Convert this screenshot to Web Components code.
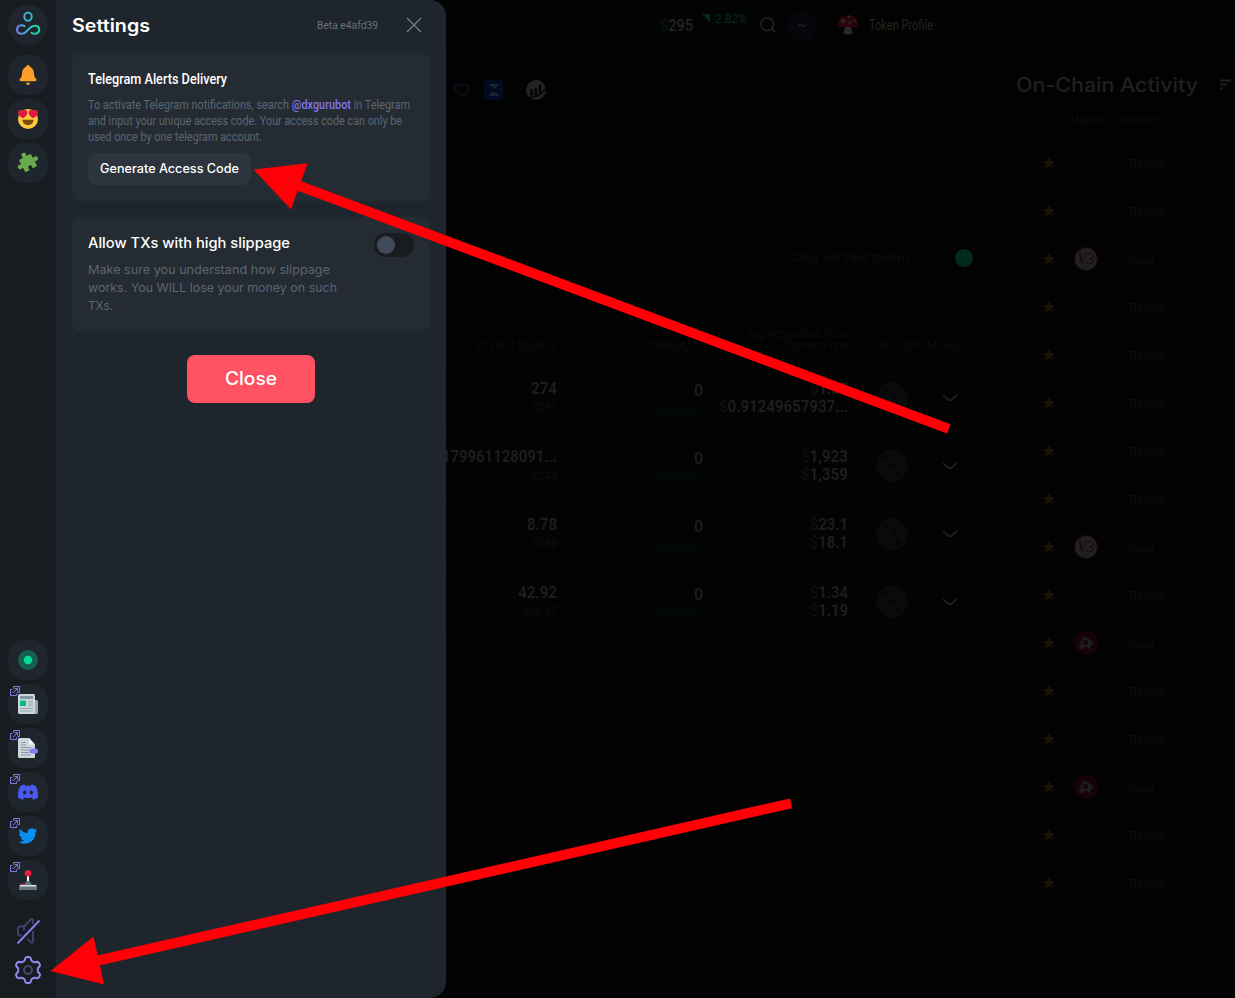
<!DOCTYPE html>
<html lang="en">
<head>
<meta charset="utf-8">
<title>Settings</title>
<style>
html,body{margin:0;background:#020202;overflow:hidden}
</style>
</head>
<body>
<dx-app></dx-app>
<script>
const COND = '"Roboto","Noto Sans",sans-serif';
const WIDE = '"Inter","Open Sans",sans-serif';

function define(name, html, after) {
  customElements.define(name, class extends HTMLElement {
    connectedCallback() {
      if (this.shadowRoot) return;
      const root = this.attachShadow({ mode: 'open' });
      root.innerHTML = typeof html === 'function' ? html(this) : html;
      if (after) after(this, root);
    }
  });
}

/* A single line of text set to an exact width by condensing its glyphs. */
define('fit-text', el => `<style>
  :host{display:block;flex:none;white-space:nowrap;width:${el.getAttribute('w')}px}
  span{display:inline-block;transform-origin:0 50%;vertical-align:top}
</style><span><slot></slot></span>`, (el, root) => {
  const s = root.querySelector('span');
  if (s.offsetWidth) s.style.transform = `scaleX(${el.getAttribute('w') / s.getBoundingClientRect().width})`;
});

const ICONS = {
  logo: `<defs><linearGradient id="g" gradientUnits="userSpaceOnUse" x1="8" y1="24" x2="32" y2="24"><stop offset="0" stop-color="#7a7ee8"/><stop offset=".5" stop-color="#42b0d0"/><stop offset="1" stop-color="#0ce59a"/></linearGradient></defs>
   <g fill="none" stroke="url(#g)" stroke-width="2" stroke-linecap="round"><ellipse cx="20" cy="11.600" rx="3.700" ry="4.200"/><path d="M16.500 21.200C13.500 19.200 9 20.500 9 24.400c0 4.600 5.500 5.600 8.500 2.900l5-4.700c3.500-3.300 8.700-2 8.700 1.900 0 4-4.500 5.500-7.700 3.200"/></g>`,
  bell: `<path fill="#ff9f2b" d="M20 10c1.200 0 1.800.8 1.800 1.700 3 .9 3.900 3.500 4.100 6.500.2 3.300.9 4.400 2.300 5.900.8 1.100.2 2.200-1 2.200H12.800c-1.200 0-1.800-1.100-1-2.200 1.400-1.500 2.100-2.600 2.300-5.900.2-3 1.100-5.600 4.100-6.500 0-.9.6-1.700 1.800-1.700zM18 27.800h4c0 3-4 3-4 0z"/>`,
  love: `<circle cx="20" cy="20" r="10" fill="#ffc83d"/><path fill="#7d4d08" d="M14.500 20.800h11c.2 7-11.200 7-11 0z"/><path fill="#e0183f" d="M15.300 19.200c-3-1.200-5.800-3.200-5.300-6.300.5-2.600 3.600-3 4.800-.8 1.400-2 4.700-1.200 4.600 1.500-.1 2.600-2.100 4.300-4.100 5.600zM24.700 19.200c3-1.200 5.800-3.200 5.300-6.300-.5-2.600-3.600-3-4.800-.8-1.400-2-4.700-1.200-4.600 1.500.1 2.600 2.100 4.300 4.100 5.600z"/>`,
  puzzle: `<g transform="rotate(-28 20 20)"><rect x="13.300" y="13" width="13.400" height="14" rx="1.200" fill="#68ab4c"/><g fill="#68ab4c"><circle cx="20" cy="11.200" r="2.400"/><path d="M18.600 11h2.800v4h-2.800z"/><circle cx="28.700" cy="19.800" r="2.400"/><path d="M25 18.400h4v2.800h-4zM11 18.400h4v2.800h-4z"/><circle cx="11.300" cy="19.800" r="2.400"/></g><circle cx="20" cy="25" r="2.100" fill="#1e252c"/><path fill="#1e252c" d="M18.800 24.500h2.400V28h-2.400z"/></g>`,
  status: `<circle cx="20" cy="20" r="10" fill="#14614e"/><circle cx="20" cy="20" r="4.200" fill="#05db98"/>`,
  news: `<rect x="23" y="16" width="7" height="14" rx="1.500" fill="#98a8b0"/><rect x="10" y="10" width="17" height="20" rx="1.500" fill="#cbd7dc"/><path stroke="#8396a1" stroke-width="3" d="M12 13.500h13"/><rect x="12" y="16.500" width="6" height="5.500" fill="#06bc7e"/><path stroke="#98a8b0" d="M20 17.500h5M20 20h5M20 22h5M12 24.500h13M12 27h13"/>`,
  doc: `<path fill="#cbd7dc" d="M11.500 10H21l6 6.500V29q0 1-1 1H11.500q-1.500 0-1.500-1.500v-17q0-1.500 1.500-1.500z"/><path fill="#f2f7f8" d="M21 10l6 6.500h-5q-1 0-1-1z"/><path stroke="#8598a3" d="M13 14.500h5M13 17h5M13 19.500h10M13 22h9M13 24.500h8M13 27h10"/><rect x="21.500" y="20.500" width="8.500" height="5" rx="2.500" fill="#8a7bf0"/>`,
  discord: `<path fill="#4b58f0" d="M16.500 12.500l.8 1.300a16 16 0 0 1 5.400 0l.8-1.300c1.700.3 3 .8 4.100 1.400 1.900 3.300 2.700 7.400 2.400 11.500-1.600 1.200-3.300 1.900-5 2.300l-1.200-2.200c-2.500.7-5.100.7-7.600 0L15 27.700c-1.700-.4-3.400-1.100-5-2.300-.3-4.100.5-8.200 2.400-11.500 1.100-.6 2.400-1.100 4.100-1.400z"/><ellipse cx="16.700" cy="20.600" rx="1.700" ry="2" fill="#1e252c"/><ellipse cx="23.300" cy="20.600" rx="1.700" ry="2" fill="#1e252c"/>`,
  twitter: `<path fill="#0a8ff0" transform="translate(10.500 10.500) scale(.79)" d="M23.950 4.570a10 10 0 0 1-2.820.77 4.960 4.960 0 0 0 2.160-2.720c-.95.550-2 .95-3.130 1.180a4.920 4.920 0 0 0-8.380 4.480C7.690 8.100 4.070 6.130 1.640 3.160a4.820 4.820 0 0 0-.67 2.480c0 1.710.87 3.210 2.190 4.100a4.900 4.900 0 0 1-2.230-.62v.06a4.920 4.920 0 0 0 3.950 4.830 5 5 0 0 1-2.210.08 4.940 4.940 0 0 0 4.600 3.420A9.870 9.870 0 0 1 0 19.540a14 14 0 0 0 7.550 2.210c9.050 0 14-7.500 14-13.980l-.02-.64a9.940 9.940 0 0 0 2.420-2.560z"/>`,
  joystick: `<path stroke="#fff" stroke-width="2" d="M20 15v8"/><circle cx="20" cy="13.300" r="3.300" fill="#e41a42"/><path fill="#66737a" d="M18.500 21h3l3 4.500h-9z"/><rect x="12.500" y="23.300" width="3.500" height="2" rx="1" fill="#d0163a"/><rect x="11" y="24.700" width="18" height="5.300" rx="1" fill="#66737a"/><path stroke="#eef3f4" stroke-width="1.300" d="M12 25.800h16"/>`,
};
define('dx-tile', el => `<style>
  :host{display:block;position:relative;width:40px;height:40px;border-radius:16px;background:#1e252c;flex:none}
  :host([round]){border-radius:50%}
  svg{display:block}
  .ext{position:absolute;left:1px;top:1px}
</style><svg width="40" height="40">${ICONS[el.getAttribute('icon')]}</svg>
${el.hasAttribute('ext') ? `<svg class="ext" width="12" height="12" fill="none" stroke="#8676e0"><path d="M4.500 3.500V1.500h6v6h-2M3.500 4.500h-2v6h6v-2M4 8l4-4M5.500 3.500h3v3"/></svg>` : ''}`);

/* Outline of a six-lobed cog: the radius swings smoothly between lobe and valley. */
const COG = 'M' + Array.from({ length: 120 }, (_, i) => {
  const a = i * Math.PI / 60, r = 11.4 + 1.7 * Math.tanh(2 * Math.cos(6 * a));
  return (15 + r * Math.sin(a)).toFixed(2) + ' ' + (15 - r * Math.cos(a)).toFixed(2);
}).join('L') + 'Z';

define('dx-nav', `<style>
  :host{display:flex;flex-direction:column;align-items:center;width:56px;height:998px;background:#181b1f;box-sizing:border-box;padding:5px 0 13px;flex:none}
  .group{display:flex;flex-direction:column;gap:4px}
  .top{margin-top:10px}.bottom{margin-top:auto}
  .tools{display:flex;flex-direction:column;align-items:center;gap:10px;margin-top:17px}
  svg{display:block}
</style>
<dx-tile round icon="logo"></dx-tile>
<div class="group top"><dx-tile icon="bell"></dx-tile><dx-tile icon="love"></dx-tile><dx-tile icon="puzzle"></dx-tile></div>
<div class="group bottom"><dx-tile icon="status"></dx-tile><dx-tile ext icon="news"></dx-tile><dx-tile ext icon="doc"></dx-tile><dx-tile ext icon="discord"></dx-tile><dx-tile ext icon="twitter"></dx-tile><dx-tile ext icon="joystick"></dx-tile></div>
<div class="tools">
<svg width="28" height="28" fill="none" stroke="#453d70" stroke-width="2" stroke-linejoin="round"><path d="M7.500 18.500H6Q4 18.500 4 16.500v-5Q4 9.500 6 9.500h4L16.500 2.800Q19 1 19 3.500V7M19 14v10q0 2.500-2.500.8L13.500 22M10 9.500v4"/><path stroke="#8b7bea" d="M3.500 26.500L25.500 3.500"/></svg>
<svg width="30" height="30" fill="none" stroke-width="2"><circle cx="15" cy="15" r="4" stroke="#4b4569"/><path stroke="#9487f2" stroke-linejoin="round" d="${COG}"/></svg>
</div>`);

define('dx-card', `<style>:host{display:block;background:#252b32;border-radius:8px;padding:16px;margin-bottom:16px}</style><slot></slot>`);
define('dx-toggle', `<style>:host{display:flex;align-items:center;box-sizing:border-box;width:40px;height:24px;padding-left:3px;border-radius:12px;background:#181b1f;flex:none}
  i{width:18px;height:18px;border-radius:50%;background:#404a58}</style><i></i>`);
define('dx-button', `<style>:host{display:flex;align-items:center;justify-content:center;box-sizing:border-box;padding-bottom:1px;width:163px;height:32px;border-radius:8px;background:#2d343e;color:#fff;font:500 12.5px ${WIDE}}
  :host([primary]){width:128px;height:48px;background:#ff5263;font-size:18px;margin:24px auto 0}</style><slot></slot>`);

define('dx-settings', `<style>
  :host{display:block;box-sizing:border-box;width:390px;height:998px;padding:0 16px;background:#1f252c;border-radius:0 16px 16px 0;font-family:${COND};color:#fff;flex:none}
  header{display:flex;align-items:center;height:53px;padding:0 8px 3px 0;box-sizing:border-box}
  .name{font:600 18px ${WIDE};margin-right:auto}
  .beta{font-size:11.500px;color:#66717c;margin-right:28px}
  .t{line-height:20px;font-size:14px;font-weight:500;margin-bottom:8px}
  .p{font-size:12.500px;line-height:16px;color:#5b6673;margin-bottom:8px}
  b{color:#8373e9;font-weight:500}
  .row{display:flex;justify-content:space-between}
  .w{font-family:${WIDE}}
  .p.w{font-size:12px;line-height:18px;margin:0}
</style>
<header><fit-text class="name" w="78">Settings</fit-text><fit-text class="beta" w="61">Beta e4afd39</fit-text>
<svg width="16" height="16" stroke="#77818b" stroke-width="1.200"><path d="M1 1L15 15M15 1L1 15"/></svg></header>
<dx-card><fit-text class="t" w="139">Telegram Alerts Delivery</fit-text>
<div class="p"><fit-text w="322">To activate Telegram notifications, search <b>@dxgurubot</b> in Telegram</fit-text>
<fit-text w="314">and input your unique access code. Your access code can only be</fit-text><fit-text w="174">used once by one telegram account.</fit-text></div>
<dx-button><fit-text w="139">Generate Access Code</fit-text></dx-button></dx-card>
<dx-card><div class="row"><div><fit-text class="t w" w="202">Allow TXs with high slippage</fit-text>
<div class="p w"><fit-text w="242">Make sure you understand how slippage</fit-text><fit-text w="249">works. You WILL lose your money on such</fit-text><fit-text w="25">TXs.</fit-text></div></div>
<dx-toggle></dx-toggle></div></dx-card>
<dx-button primary><fit-text w="52">Close</fit-text></dx-button>`);

define('dx-topbar', `<style>
  :host{display:flex;align-items:center;height:52px;padding:0 0 2px 214px;box-sizing:border-box;background:#020403;color:#242424;font-family:${COND};font-size:14px}
  .price{font-size:17px;font-weight:500}.price i{font-style:normal;color:#0d1113;font-weight:400}
  .tri{margin:-13px 5px 0 9px}.pct{color:#022a1d;margin-top:-13px;font-size:13px}
  .search{margin:0 12px 0 13px}
  .btn{width:27px;height:27px;border-radius:8px;background:#04060a;display:flex;align-items:center;justify-content:center}
  .pill{display:flex;align-items:center;gap:11px;height:40px;border-radius:20px;background:#020202;padding:0 10px;margin-left:13px}
</style>
<fit-text class="price" w="33"><i>$</i>295</fit-text>
<svg class="tri" width="8" height="9"><path fill="#022a1d" d="M0 0h8v8.500z"/></svg><fit-text class="pct" w="32">2.82%</fit-text>
<svg class="search" width="16" height="16" fill="none" stroke="#242424" stroke-width="1.400"><circle cx="7.300" cy="7.300" r="6.300"/><path d="M12 12l3 3"/></svg>
<div class="btn">~</div>
<div class="pill"><svg width="20" height="22"><path fill="#262626" d="M7 13h6l2 6.500q-5 2-10 0z"/><path fill="#2b0307" d="M0 9Q1 1 10 1t10 8q0 5-4 4H4q-4 1-4-4z"/><g fill="#272024"><circle cx="5" cy="7" r="2.500"/><circle cx="12" cy="9" r="1.800"/><circle cx="11" cy="3" r="1.500"/><circle cx="17" cy="7" r="1.600"/></g></svg><fit-text w="64">Token Profile</fit-text></div>`);

define('dx-links', `<style>:host{display:flex;align-items:center;height:20px;padding:28px 0 0 8px}svg{display:block}
 .h{margin-right:14px}.z{margin-right:23px}</style>
<svg class="h" width="16" height="16" fill="none" stroke="#100d20" stroke-width="1.600"><path d="M8 14C5 12 1 9 1 6c0-4 5-5 7-1.500C10 1 15 2 15 6c0 3-4 6-7 8z"/></svg>
<svg class="z" width="19" height="20"><rect width="19" height="20" rx="3" fill="#020b22"/><path fill="#1d222e" d="M5 4h10l-3.500 4.500L5 5.500zM15 16H4.500L8 11.500l7 3z"/></svg>
<svg width="20" height="20"><circle cx="10" cy="10" r="10" fill="#232323"/><path stroke="#030303" stroke-width="2.600" stroke-linecap="round" d="M5.500 10v5M9.700 9v5.500M14 6v6"/><path fill="none" stroke="#030303" stroke-width="1.600" d="M2 17.500q11 .5 18-9"/></svg>`);

define('dx-asset', el => {
  const g = n => el.getAttribute(n) || '';
  return `<style>
  :host{display:grid;grid-template-columns:111px 146px 145px 60px 68px;height:60px;margin-bottom:8px;width:530px;box-sizing:border-box;background:#030303;border-radius:0 8px 8px 0;font:600 16px/18px ${COND};color:#1e1e1e}
  div{display:flex;flex-direction:column;align-items:flex-end;min-width:0}
  .bal{overflow:hidden;padding-top:12px}.sub{font-size:12px;font-weight:400;color:#0c0d0f;line-height:20px}
  .chg{padding-top:14px}.bar{flex-direction:row;gap:1px;margin-top:6px}
  .bar i{width:51px;height:8px;background:#060304;border-radius:2px}.bar i+i{width:52px;background:#020605}
  .price{padding-top:12px}.price b{font-weight:400;color:#0e1114}
  svg{display:block;margin-top:14px}.chev{margin:26px 18px 0 0}
</style>
<div class="bal"><fit-text w="${g('bw')}">${g('bal')}</fit-text><fit-text class="sub" w="${g('sw')}">${g('sub')}</fit-text></div>
<div class="chg"><fit-text w="9">0</fit-text><div class="bar"><i></i><i></i></div></div>
<div class="price"><fit-text w="${g('aw')}"><b>$</b>${g('avg')}</fit-text><fit-text w="${g('cw')}"><b>$</b>${g('cur')}</fit-text></div>
<div><svg width="32" height="32"><circle cx="16" cy="16" r="16" fill="#080a0c"/><g fill="#050608"><circle cx="9" cy="8" r="3"/><circle cx="18" cy="15" r="2.800"/><circle cx="22" cy="25" r="3"/><circle cx="8" cy="20" r="1.500"/><circle cx="28" cy="14" r="1.500"/><circle cx="19" cy="5" r="1"/></g></svg></div>
<div><svg class="chev" width="16" height="10" fill="none" stroke="#242424" stroke-width="1.600" stroke-linecap="round"><path d="M1.500 1.500l5.300 4.300q1.200.9 2.400 0l5.300-4.300"/></svg></div>`;
});

define('dx-portfolio', `<style>
  :host{display:block;font-family:${COND};font-size:12px}
  .ver{display:flex;align-items:center;justify-content:flex-end;width:527px;height:20px;margin:148px 0 60px;color:#0d0d0d;font:400 12px ${WIDE};gap:44px}
  .ver fit-text{margin-top:-1px}
  .ver i{width:18px;height:18px;border-radius:50%;background:#022a1d}
  .head{display:grid;grid-template-columns:111px 146px 145px 112px;justify-items:end;align-items:end;height:24px;color:#0b0c0e;line-height:12px;margin-bottom:16px}
  .two{display:flex;flex-direction:column;align-items:flex-end}
</style>
<div class="ver"><fit-text w="119">Only verified tokens</fit-text><i></i></div>
<div class="head"><fit-text w="79">Current Balance</fit-text><fit-text w="55">Change, 7d</fit-text><div class="two"><fit-text w="101">Avg Acquisition Price</fit-text><fit-text w="64">Current Price</fit-text></div><fit-text w="81">In/Out/At Money</fit-text></div>
<dx-asset bal="274" bw="26" sub="$251" sw="25" avg="1.00" aw="38" cur="0.91249657937..." cw="129"></dx-asset>
<dx-asset bal="179961128091..." bw="115" sub="$244" sw="25" avg="1,923" aw="47" cur="1,359" cw="47"></dx-asset>
<dx-asset bal="8.78" bw="30" sub="$158" sw="25" avg="23.1" aw="38" cur="18.1" cw="38"></dx-asset>
<dx-asset bal="42.92" bw="39" sub="$50.87" sw="35" avg="1.34" aw="38" cur="1.19" cw="38"></dx-asset>`);

const MARKET = {
  v3: `<circle cx="12" cy="12" r="11.500" fill="#202020" stroke="#1d0410"/><text x="12" y="17" text-anchor="middle" font-family="Liberation Serif,serif" font-style="italic" font-size="16" textLength="17" lengthAdjust="spacingAndGlyphs" fill="#1d0410">V3</text>`,
  uni: `<circle cx="12" cy="12" r="12" fill="#17020c"/><path fill="#1f1c1e" d="M7 4.500l3.500 2.500c5-1.500 9 3 8.500 9-.5-3-2-3.500-2.500-2 .5 2.500 0 4-2 5 .5-2-1-3-3-3s-2.500 1.500-2.500 2.500c-2 0-4-1-4-2.500 0-2 2-3 2.500-5s0-3 1-4z"/><circle cx="11.500" cy="11.500" r="2.600" fill="#17020c"/>`
};
define('dx-tx', el => {
  const m = el.getAttribute('market');
  return `<style>
  :host{display:grid;grid-template-columns:12px 24px 44px;align-items:center;height:48px;padding-left:33px;color:#0c0e0f;font:400 12.500px ${COND}}
  svg{display:block}.m{margin-left:19px}.l{margin-left:49px}
</style>
<svg width="12" height="12"><path fill="#1b1405" d="M6 0l1.700 4 4.300.4-3.200 2.900.9 4.200L6 9.300l-3.700 2.200.9-4.200L0 4.400 4.300 4z"/></svg>
<svg class="m" width="24" height="24">${m ? MARKET[m] : ''}</svg>
<fit-text class="l" w="${m ? 26 : 40}">${m ? 'Swap' : 'Transfer'}</fit-text>`;
});

define('dx-activity', () => `<style>
  :host{display:block;width:225px;flex:none;padding-top:17px;font-family:${COND}}
  .t{display:flex;align-items:center;height:32px;padding-left:6px;color:#202020;font:500 20px ${WIDE};gap:22px}
  .h{display:flex;gap:16px;padding-left:60px;height:38px;box-sizing:border-box;padding-top:12px;color:#0a0c0f;font-size:12px;line-height:16px}
</style>
<div class="t"><fit-text w="182">On-Chain Activity</fit-text><svg width="12" height="12" stroke="#202020" stroke-width="1.800"><path d="M0 1.500h11M0 5.500h7M0 9.500h3"/></svg></div>
<div class="h"><fit-text w="34">Market</fit-text><fit-text w="37">Method</fit-text></div>
${['', '', 'v3', '', '', '', '', '', 'v3', '', 'uni', '', '', 'uni', '', ''].map(m => `<dx-tx market="${m}"></dx-tx>`).join('')}`);

define('dx-arrows', `<style>:host{position:absolute;left:0;top:0;pointer-events:none}svg{display:block}</style>
<svg width="1235" height="998" fill="#ff0006"><path d="M253.500 169.500L307.500 163.300L291 209.500z"/><path d="M50.500 971L93.500 936.500L104 984.500z"/>
<path stroke="#ff0006" stroke-width="10" d="M297 185L948.800 428.900M96 961L791 803.300"/></svg>`);

define('dx-app', `<style>
  :host{display:flex;position:relative;width:1235px;height:998px;overflow:hidden;background:#020202}
  main{flex:1;min-width:0;background:#020202}
  .cols{display:flex;justify-content:space-between}
  .left{flex:1;min-width:0}
</style>
<dx-nav></dx-nav><dx-settings></dx-settings>
<main><dx-topbar></dx-topbar><div class="cols"><div class="left"><dx-links></dx-links><dx-portfolio></dx-portfolio></div><dx-activity></dx-activity></div></main>
<dx-arrows></dx-arrows>`);
</script>
</body>
</html>
